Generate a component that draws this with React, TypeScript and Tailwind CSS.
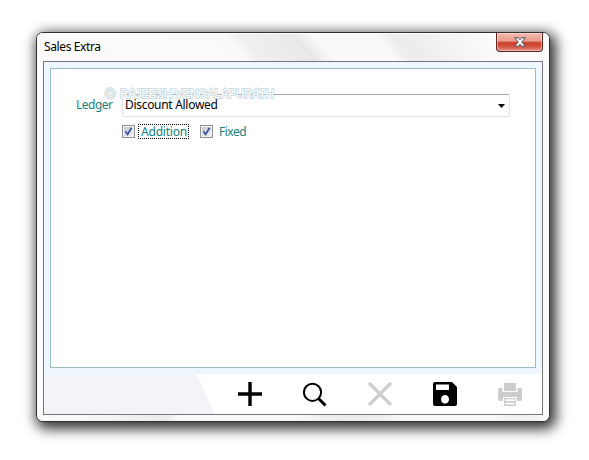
import React from "react";

function CheckBox() {
  return (
    <span className="flex h-[13px] w-[13px] shrink-0 border border-[#8e8f8f] bg-[#f4f4f4] p-px">
      <span className="h-[9px] w-[9px] bg-linear-to-br from-[#c3c8cf] to-[#f0f1f3]">
        <svg width="9" height="9" viewBox="0 0 9 9" className="block overflow-visible">
          <path d="M1.4 4.3 3.6 7.4 7.6 0.8" fill="none" stroke="#42549b" strokeWidth="1.8" />
        </svg>
      </span>
    </span>
  );
}

function TitleBar() {
  return (
    <header className="flex h-[28px] justify-between rounded-t-[6px] bg-[linear-gradient(50deg,#fbfbfb_0%,#fafafa_39%,#efefef_42%,#ececec_48%,#e8e8e8_52%,#fafafa_56%,#fafafa_67%,#ededed_70%,#eeeeee_74%,#fafafa_86%)] shadow-[inset_0_1px_0_#ffffff]">
      <h1 className="pt-[6px] pl-[7px] text-[12px] leading-[16px] tracking-[-0.38px] whitespace-nowrap text-black">
        Sales Extra
      </h1>
      <button
        aria-label="Close"
        className="mr-[6px] flex h-[19px] w-[47px] items-center justify-center rounded-b-[4px] border border-t-0 border-[#5a2520] bg-[linear-gradient(#f3b9ae_0%,#e99a8d_46%,#cf432b_50%,#cf4b34_70%,#e58f82_100%)] shadow-[inset_0_0_0_1px_#ffffff70]"
      >
        <svg width="12" height="10" viewBox="0 0 12 10">
          <path
            d="M.8.7h3.5L6 2.7 7.7.7h3.5L7.9 5l3.3 4.3H7.7L6 7.3l-1.7 2H.8L4.1 5Z"
            fill="#f5f5f8"
            stroke="#535666"
            strokeWidth="1"
            strokeLinejoin="round"
          />
        </svg>
      </button>
    </header>
  );
}

function Toolbar() {
  return (
    <footer className="relative flex h-[40px] shrink-0 bg-white">
      <svg className="absolute top-0 left-0" width="172" height="40" viewBox="0 0 172 40">
        <path d="M0 0H147Q153 0 156 6L168 35Q170 39 172 40H0Z" fill="#f3f4f7" />
      </svg>
      <div className="relative flex gap-[41px] pt-[8px] pl-[194px]">
        <svg width="24" height="24" viewBox="0 0 24 24">
          <path d="M12 0V24M0 12H24" stroke="#000" strokeWidth="3.4" />
        </svg>
        <svg width="24" height="25" viewBox="0 0 24 25">
          <circle cx="9.5" cy="10.3" r="8.6" fill="none" stroke="#000" strokeWidth="2" />
          <path d="m15.5 16.5 7 7" stroke="#000" strokeWidth="3" />
        </svg>
        <svg width="24" height="24" viewBox="0 0 24 24">
          <path d="m1 1 22 22M23 1 1 23" stroke="#ccc" strokeWidth="3.2" />
        </svg>
        <svg width="24" height="24" viewBox="0 0 24 24">
          <path
            fillRule="evenodd"
            d="M2 0H19L24 5V22Q24 24 22 24H2Q0 24 0 22V2Q0 0 2 0ZM3 2.5V8H16V2.5ZM12 13a4 4.3 0 1 0 .01 0Z"
            fill="#000"
          />
        </svg>
        <svg width="24" height="24" viewBox="0 0 24 24" fill="#ccc">
          <path d="M6 1H18V9H6Z" />
          <path d="M2 6H4.5V10H19.5V6H22Q24 6 24 8V17Q24 19 22 19H19V15H5V19H2Q0 19 0 17V8Q0 6 2 6Z" />
          <path fillRule="evenodd" d="M6 16H18V24H6ZM7.3 17.3V19H16.7V17.3ZM7.3 20.7V22.4H16.7V20.7Z" />
        </svg>
      </div>
    </footer>
  );
}

export default function App() {
  return (
    <main className="h-[460px] w-[589px] overflow-hidden bg-white pt-[32px] pl-[36px] font-['Noto_Sans','Open_Sans',sans-serif]">
      <section className="h-[390px] w-[514px] rounded-[7px] border border-[#303030] bg-[#fbfbfb] shadow-[3px_4px_13px_3px_#000000cc]">
        <TitleBar />
        <div className="ml-[6px] flex h-[354px] w-[500px] flex-col border border-[#777] bg-[#eef7ff]">
          <div className="relative mx-[6px] mt-[6px] mb-[6px] h-[300px] shrink-0 border border-[#98bdc5] bg-white text-[12px] text-[#148080]">
            <div className="flex pt-[25px] pl-[25px]">
              <label className="w-[46px] pt-[2px] leading-[17px] tracking-[-0.5px]">Ledger</label>
              <div className="flex h-[23px] w-[388px] justify-between rounded-[2px] border border-[#dfe2ea] border-t-[#aaabb0] pr-[4px] pl-[2px] text-black">
                <span className="pt-px leading-[17px] tracking-[-0.3px]">Discount Allowed</span>
                <svg className="mt-[9px]" width="7" height="4" viewBox="0 0 7 4">
                  <path d="M0 0H7L3.5 4Z" />
                </svg>
              </div>
            </div>
            <div className="mt-[7px] flex h-[15px] items-center pl-[71px]">
              <CheckBox />
              <span className="ml-[3px] flex h-[15px] w-[51px] items-center border border-dotted border-black pl-[2px] leading-[15px] tracking-[-0.2px]">
                Addition
              </span>
              <span className="ml-[11px] flex">
                <CheckBox />
              </span>
              <span className="ml-[6px] leading-[15px] tracking-[-0.5px]">Fixed</span>
            </div>
            <div className="absolute top-[17px] left-[54px] flex items-center font-['Liberation_Sans',Arial,sans-serif] text-[12px] leading-[16px] tracking-[-0.48px] whitespace-nowrap text-white [paint-order:stroke_fill] [-webkit-text-stroke:1.7px_#c3d9dd]">
              <span className="w-[15px] text-[14px]">©</span>
              <span>RAJEESH VENGALAPURATH</span>
            </div>
          </div>
          <Toolbar />
        </div>
        <div className="h-[6px] rounded-b-[6px] bg-[linear-gradient(90deg,#fafafa_0%,#f8f8f8_10%,#ebebeb_25%,#fafafa_28%,#fafafa_50%,#ececec_58%,#ededed_67%,#fafafa_72%,#fafafa_88%,#efefef_94%,#f8f8f8_100%)]" />
      </section>
    </main>
  );
}
